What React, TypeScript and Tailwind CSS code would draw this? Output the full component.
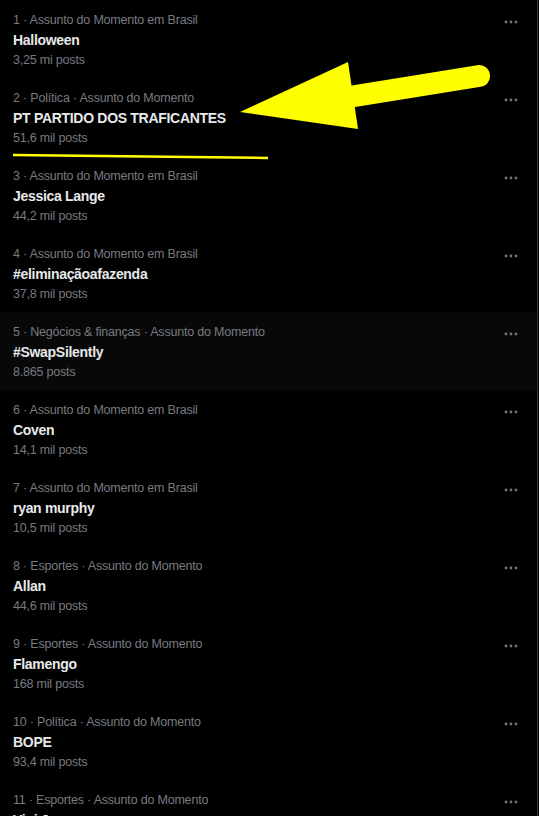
import React from "react";

const trends = [
  { cat: "1 · Assunto do Momento em Brasil", title: "Halloween", posts: "3,25 mi posts" },
  { cat: "2 · Política · Assunto do Momento", title: "PT PARTIDO DOS TRAFICANTES", posts: "51,6 mil posts" },
  { cat: "3 · Assunto do Momento em Brasil", title: "Jessica Lange", posts: "44,2 mil posts" },
  { cat: "4 · Assunto do Momento em Brasil", title: "#eliminaçãoafazenda", posts: "37,8 mil posts" },
  { cat: "5 · Negócios & finanças · Assunto do Momento", title: "#SwapSilently", posts: "8.865 posts", hl: true },
  { cat: "6 · Assunto do Momento em Brasil", title: "Coven", posts: "14,1 mil posts" },
  { cat: "7 · Assunto do Momento em Brasil", title: "ryan murphy", posts: "10,5 mil posts" },
  { cat: "8 · Esportes · Assunto do Momento", title: "Allan", posts: "44,6 mil posts" },
  { cat: "9 · Esportes · Assunto do Momento", title: "Flamengo", posts: "168 mil posts" },
  { cat: "10 · Política · Assunto do Momento", title: "BOPE", posts: "93,4 mil posts" },
  { cat: "11 · Esportes · Assunto do Momento", title: "Vini Jr", posts: "20 mil posts" },
];

function Dots() {
  return (
    <svg width="14" height="4" viewBox="0 0 14 4" className="block">
      <circle cx="2" cy="2" r="1.4" fill="#71767b" />
      <circle cx="7" cy="2" r="1.4" fill="#71767b" />
      <circle cx="12" cy="2" r="1.4" fill="#71767b" />
    </svg>
  );
}

export default function App() {
  return (
    <div
      className="relative w-[539px] h-[816px] overflow-hidden bg-black"
      style={{ fontFamily: '"Liberation Sans", Arial, sans-serif' }}
    >
      <div className="w-[538px] h-full border-r border-[#2f3336]">
        {trends.map((t, i) => (
          <div
            key={i}
            className={`flex h-[78px] pl-[13px] pr-[19px] pt-[12px] ${t.hl ? "bg-[#080808]" : ""}`}
          >
            <div className="flex-1 flex flex-col">
              <div className="text-[12.5px] leading-[16px] tracking-[-0.2px] text-[#777b80]">{t.cat}</div>
              <div className="text-[14px] leading-[20px] font-bold tracking-[-0.3px] text-[#e7e9ea] mt-[2px]">
                {t.title}
              </div>
              <div className="text-[12.5px] leading-[16px] tracking-[-0.2px] text-[#777b80] mt-[2px]">{t.posts}</div>
            </div>
            <div className="pt-[8px]">
              <Dots />
            </div>
          </div>
        ))}
      </div>
      <svg
        className="absolute left-0 top-0 pointer-events-none"
        width="539"
        height="816"
        viewBox="0 0 539 816"
      >
        <line x1="355" y1="96" x2="479" y2="76" stroke="#ffff00" strokeWidth="22" strokeLinecap="round" />
        <polygon points="240,112 348,62 358,129" fill="#ffff00" />
        <line x1="13" y1="155" x2="268" y2="158" stroke="#ffff00" strokeWidth="2.5" />
      </svg>
    </div>
  );
}
